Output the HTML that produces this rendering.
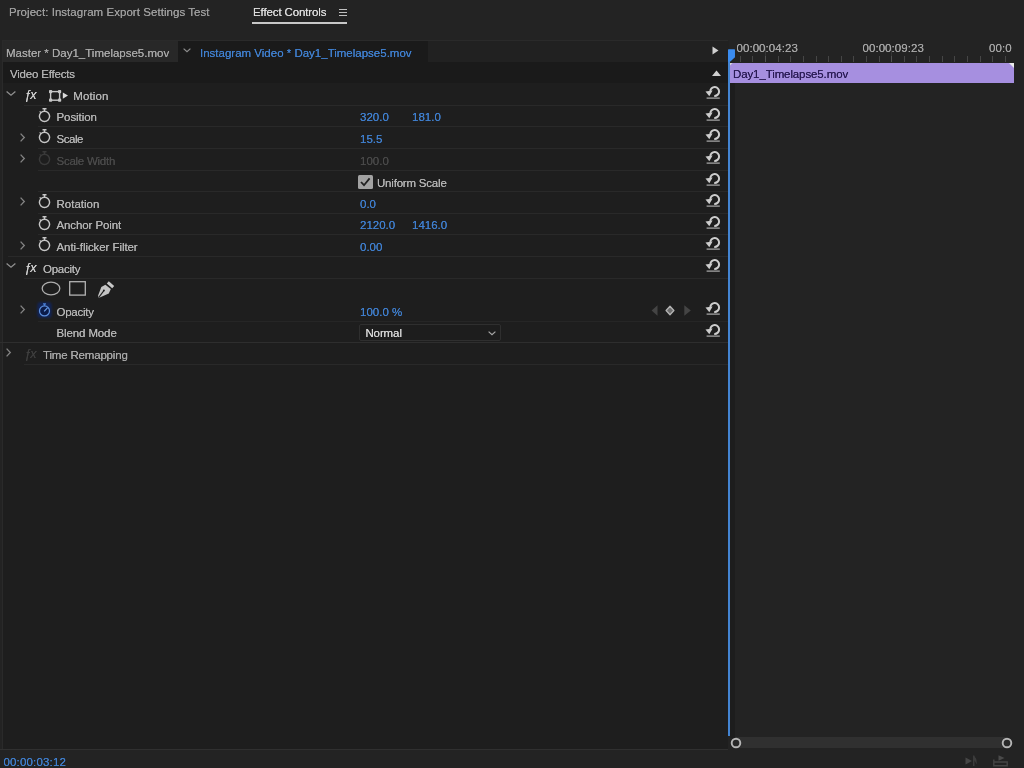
<!DOCTYPE html>
<html>
<head>
<meta charset="utf-8">
<title>Effect Controls</title>
<style>
html,body{margin:0;padding:0;}
body{width:1024px;height:768px;overflow:hidden;background:#232323;position:relative;
  font-family:"Liberation Sans","DejaVu Sans",sans-serif;font-size:11.5px;color:#b4b4b4;}
.a{position:absolute;}
.t{position:absolute;white-space:nowrap;line-height:14px;height:14px;filter:blur(0.35px);text-shadow:0 0 0.6px currentColor;}
.blue{color:#4080d0;}
.dim{color:#4a4a4a;}
.sep{position:absolute;height:1px;background:#2b2b2b;left:36px;width:688px;}
svg{position:absolute;overflow:visible;}
</style>
</head>
<body>
<!-- panel body -->
<div class="a" style="left:2px;top:41px;width:726px;height:708px;background:#1e1e1e;"></div>
<div class="a" style="left:2px;top:40px;width:726px;height:1px;background:#2a2a2a;"></div>
<div class="a" style="left:2px;top:41px;width:1px;height:708px;background:#2a2a2a;"></div>
<!-- timeline area bg -->
<div class="a" style="left:728px;top:41px;width:296px;height:708px;background:#232323;"></div>
<div class="a" style="left:730px;top:83px;width:4.5px;height:655px;background:#1d1d1d;"></div>

<!-- tab header -->
<div class="t" style="left:9px;top:5.1px;color:#9d9d9d;letter-spacing:0.05px;">Project: Instagram Export Settings Test</div>
<div class="t" style="left:253px;top:5.2px;color:#dcdcdc;letter-spacing:-0.12px;">Effect Controls</div>
<div class="a" style="left:252px;top:21.6px;width:95px;height:2px;background:#c8c8c8;"></div>
<svg style="left:339px;top:9px" width="8" height="8" viewBox="0 0 8 8"><path d="M0 0.5H8M0 3.5H8M0 6.5H8" stroke="#c0c0c0" stroke-width="1.1" fill="none"/></svg>

<!-- clip row -->
<div class="a" style="left:3px;top:41px;width:175px;height:21px;background:#282828;"></div>
<div class="a" style="left:178px;top:41px;width:250px;height:21px;background:#1a1a1a;"></div>
<div class="a" style="left:428px;top:41px;width:301px;height:21px;background:#212121;"></div>
<div class="t" style="left:6px;top:46px;color:#a8a8a8;">Master * Day1_Timelapse5.mov</div>
<svg style="left:183px;top:47.5px" width="8" height="5" viewBox="0 0 8 5"><path d="M0.6 0.6L4 3.8L7.4 0.6" stroke="#8e8e8e" stroke-width="1.2" fill="none"/></svg>
<div class="t blue" style="left:200px;top:46px;">Instagram Video * Day1_Timelapse5.mov</div>
<svg style="left:712.3px;top:46.3px" width="7" height="9" viewBox="0 0 7 9"><path d="M0.5 0.5L6.5 4.5L0.5 8.5Z" fill="#d0d0d0"/></svg>

<!-- Video Effects row -->
<div class="a" style="left:3px;top:62px;width:726px;height:21px;background:#1a1a1a;"></div>
<div class="t" style="left:10px;top:67px;color:#b0b0b0;letter-spacing:-0.2px;">Video Effects</div>
<svg style="left:712px;top:70px" width="9" height="6" viewBox="0 0 9 6"><path d="M0 6L4.5 0.5L9 6Z" fill="#d0d0d0"/></svg>

<div id="rows">
<svg style="left:6px;top:90.6px" width="10" height="5" viewBox="0 0 10 5"><path d="M0.6 0.6L5 4.2L9.4 0.6" stroke="#909090" stroke-width="1.3" fill="none"/></svg>
<div class="t" style="left:24.2px;top:87.7px;font-style:italic;font-size:12.5px;letter-spacing:-0.9px;color:#cfcfcf;">&#402;x</div>
<svg style="left:48.5px;top:90.0px" width="20" height="12" viewBox="0 0 20 12"><rect x="1.6" y="1.6" width="9" height="8.6" stroke="#c6c6c6" stroke-width="1.4" fill="none"/><rect x="0" y="0" width="3.2" height="3.2" rx="0.8" fill="#c6c6c6"/><rect x="9" y="0" width="3.2" height="3.2" rx="0.8" fill="#c6c6c6"/><rect x="0" y="8.6" width="3.2" height="3.2" rx="0.8" fill="#c6c6c6"/><rect x="9" y="8.6" width="3.2" height="3.2" rx="0.8" fill="#c6c6c6"/><path d="M13.8 2.6L19 5.6L13.8 8.7Z" fill="#dadada"/></svg>
<div class="t " style="left:73.3px;top:88.7px;letter-spacing:0.12px;">Motion</div>
<svg style="left:705px;top:84.1px" width="16" height="16" viewBox="0 0 16 16"><path d="M5.3 7.5A4.4 4.4 0 1 1 9.2 11.87" stroke="#cdcdcd" stroke-width="2" fill="none"/><path d="M0.5 7.6L7.6 6.4L4.3 12.2Z" fill="#cdcdcd"/><path d="M1.6 14.1H14.8" stroke="#b4b4b4" stroke-width="1.15"/></svg>
<div class="a" style="left:24px;top:104.7px;width:704px;height:1px;background:#292929;"></div>
<svg style="left:37.7px;top:106.7px" width="13" height="16" viewBox="0 0 13 16"><circle cx="6.5" cy="9.3" r="5.1" stroke="#c6c6c6" stroke-width="1.45" fill="none"/><path d="M4.5 1.7H8.5M6.5 1.7V4.2" stroke="#c6c6c6" stroke-width="1.4" fill="none"/><path d="M2.9 5.6L1.7 4.4" stroke="#c6c6c6" stroke-width="1.3" fill="none"/></svg>
<div class="t " style="left:56.5px;top:110.3px;letter-spacing:-0.08px;">Position</div>
<div class="t blue" style="left:360px;top:110.3px;">320.0</div>
<div class="t blue" style="left:412px;top:110.3px;">181.0</div>
<svg style="left:705px;top:105.7px" width="16" height="16" viewBox="0 0 16 16"><path d="M5.3 7.5A4.4 4.4 0 1 1 9.2 11.87" stroke="#cdcdcd" stroke-width="2" fill="none"/><path d="M0.5 7.6L7.6 6.4L4.3 12.2Z" fill="#cdcdcd"/><path d="M1.6 14.1H14.8" stroke="#b4b4b4" stroke-width="1.15"/></svg>
<div class="a" style="left:38px;top:126.3px;width:690px;height:1px;background:#292929;"></div>
<svg style="left:20.2px;top:132.5px" width="5" height="9" viewBox="0 0 5 9"><path d="M0.6 0.6L4.3 4.5L0.6 8.4" stroke="#858585" stroke-width="1.3" fill="none"/></svg>
<svg style="left:37.7px;top:128.3px" width="13" height="16" viewBox="0 0 13 16"><circle cx="6.5" cy="9.3" r="5.1" stroke="#c6c6c6" stroke-width="1.45" fill="none"/><path d="M4.5 1.7H8.5M6.5 1.7V4.2" stroke="#c6c6c6" stroke-width="1.4" fill="none"/><path d="M2.9 5.6L1.7 4.4" stroke="#c6c6c6" stroke-width="1.3" fill="none"/></svg>
<div class="t " style="left:56.5px;top:131.9px;letter-spacing:-0.45px;">Scale</div>
<div class="t blue" style="left:360px;top:131.9px;">15.5</div>
<svg style="left:705px;top:127.3px" width="16" height="16" viewBox="0 0 16 16"><path d="M5.3 7.5A4.4 4.4 0 1 1 9.2 11.87" stroke="#cdcdcd" stroke-width="2" fill="none"/><path d="M0.5 7.6L7.6 6.4L4.3 12.2Z" fill="#cdcdcd"/><path d="M1.6 14.1H14.8" stroke="#b4b4b4" stroke-width="1.15"/></svg>
<div class="a" style="left:38px;top:147.9px;width:690px;height:1px;background:#292929;"></div>
<svg style="left:20.2px;top:154.1px" width="5" height="9" viewBox="0 0 5 9"><path d="M0.6 0.6L4.3 4.5L0.6 8.4" stroke="#858585" stroke-width="1.3" fill="none"/></svg>
<svg style="left:37.7px;top:149.9px" width="13" height="16" viewBox="0 0 13 16"><circle cx="6.5" cy="9.3" r="5.1" stroke="#3a3a3a" stroke-width="1.45" fill="none"/><path d="M4.5 1.7H8.5M6.5 1.7V4.2" stroke="#3a3a3a" stroke-width="1.4" fill="none"/><path d="M2.9 5.6L1.7 4.4" stroke="#3a3a3a" stroke-width="1.3" fill="none"/></svg>
<div class="t dim" style="left:56.5px;top:153.5px;letter-spacing:-0.25px;">Scale Width</div>
<div class="t dim" style="left:360px;top:153.5px;">100.0</div>
<svg style="left:705px;top:148.9px" width="16" height="16" viewBox="0 0 16 16"><path d="M5.3 7.5A4.4 4.4 0 1 1 9.2 11.87" stroke="#cdcdcd" stroke-width="2" fill="none"/><path d="M0.5 7.6L7.6 6.4L4.3 12.2Z" fill="#cdcdcd"/><path d="M1.6 14.1H14.8" stroke="#b4b4b4" stroke-width="1.15"/></svg>
<div class="a" style="left:38px;top:169.5px;width:690px;height:1px;background:#292929;"></div>
<div class="a" style="left:358.3px;top:175.3px;width:14.5px;height:14px;background:#a2a2a2;border-radius:1.5px;"></div>
<svg style="left:358.3px;top:175.3px" width="14.5" height="14" viewBox="0 0 14.5 14"><path d="M3 7L6 10.2L11.6 3.4" stroke="#202020" stroke-width="1.8" fill="none"/></svg>
<div class="t " style="left:377px;top:175.6px;letter-spacing:-0.2px;">Uniform Scale</div>
<svg style="left:705px;top:170.5px" width="16" height="16" viewBox="0 0 16 16"><path d="M5.3 7.5A4.4 4.4 0 1 1 9.2 11.87" stroke="#cdcdcd" stroke-width="2" fill="none"/><path d="M0.5 7.6L7.6 6.4L4.3 12.2Z" fill="#cdcdcd"/><path d="M1.6 14.1H14.8" stroke="#b4b4b4" stroke-width="1.15"/></svg>
<div class="a" style="left:38px;top:191.1px;width:690px;height:1px;background:#292929;"></div>
<svg style="left:20.2px;top:197.3px" width="5" height="9" viewBox="0 0 5 9"><path d="M0.6 0.6L4.3 4.5L0.6 8.4" stroke="#858585" stroke-width="1.3" fill="none"/></svg>
<svg style="left:37.7px;top:193.1px" width="13" height="16" viewBox="0 0 13 16"><circle cx="6.5" cy="9.3" r="5.1" stroke="#c6c6c6" stroke-width="1.45" fill="none"/><path d="M4.5 1.7H8.5M6.5 1.7V4.2" stroke="#c6c6c6" stroke-width="1.4" fill="none"/><path d="M2.9 5.6L1.7 4.4" stroke="#c6c6c6" stroke-width="1.3" fill="none"/></svg>
<div class="t " style="left:56.5px;top:196.7px;">Rotation</div>
<div class="t blue" style="left:360px;top:196.7px;">0.0</div>
<svg style="left:705px;top:192.1px" width="16" height="16" viewBox="0 0 16 16"><path d="M5.3 7.5A4.4 4.4 0 1 1 9.2 11.87" stroke="#cdcdcd" stroke-width="2" fill="none"/><path d="M0.5 7.6L7.6 6.4L4.3 12.2Z" fill="#cdcdcd"/><path d="M1.6 14.1H14.8" stroke="#b4b4b4" stroke-width="1.15"/></svg>
<div class="a" style="left:38px;top:212.7px;width:690px;height:1px;background:#292929;"></div>
<svg style="left:37.7px;top:214.7px" width="13" height="16" viewBox="0 0 13 16"><circle cx="6.5" cy="9.3" r="5.1" stroke="#c6c6c6" stroke-width="1.45" fill="none"/><path d="M4.5 1.7H8.5M6.5 1.7V4.2" stroke="#c6c6c6" stroke-width="1.4" fill="none"/><path d="M2.9 5.6L1.7 4.4" stroke="#c6c6c6" stroke-width="1.3" fill="none"/></svg>
<div class="t " style="left:56.5px;top:218.3px;letter-spacing:-0.1px;">Anchor Point</div>
<div class="t blue" style="left:360px;top:218.3px;">2120.0</div>
<div class="t blue" style="left:412px;top:218.3px;">1416.0</div>
<svg style="left:705px;top:213.7px" width="16" height="16" viewBox="0 0 16 16"><path d="M5.3 7.5A4.4 4.4 0 1 1 9.2 11.87" stroke="#cdcdcd" stroke-width="2" fill="none"/><path d="M0.5 7.6L7.6 6.4L4.3 12.2Z" fill="#cdcdcd"/><path d="M1.6 14.1H14.8" stroke="#b4b4b4" stroke-width="1.15"/></svg>
<div class="a" style="left:38px;top:234.3px;width:690px;height:1px;background:#292929;"></div>
<svg style="left:20.2px;top:240.5px" width="5" height="9" viewBox="0 0 5 9"><path d="M0.6 0.6L4.3 4.5L0.6 8.4" stroke="#858585" stroke-width="1.3" fill="none"/></svg>
<svg style="left:37.7px;top:236.3px" width="13" height="16" viewBox="0 0 13 16"><circle cx="6.5" cy="9.3" r="5.1" stroke="#c6c6c6" stroke-width="1.45" fill="none"/><path d="M4.5 1.7H8.5M6.5 1.7V4.2" stroke="#c6c6c6" stroke-width="1.4" fill="none"/><path d="M2.9 5.6L1.7 4.4" stroke="#c6c6c6" stroke-width="1.3" fill="none"/></svg>
<div class="t " style="left:56.5px;top:239.9px;letter-spacing:-0.07px;">Anti-flicker Filter</div>
<div class="t blue" style="left:360px;top:239.9px;">0.00</div>
<svg style="left:705px;top:235.3px" width="16" height="16" viewBox="0 0 16 16"><path d="M5.3 7.5A4.4 4.4 0 1 1 9.2 11.87" stroke="#cdcdcd" stroke-width="2" fill="none"/><path d="M0.5 7.6L7.6 6.4L4.3 12.2Z" fill="#cdcdcd"/><path d="M1.6 14.1H14.8" stroke="#b4b4b4" stroke-width="1.15"/></svg>
<div class="a" style="left:8px;top:255.9px;width:720px;height:1px;background:#292929;"></div>
<svg style="left:6px;top:263.4px" width="10" height="5" viewBox="0 0 10 5"><path d="M0.6 0.6L5 4.2L9.4 0.6" stroke="#909090" stroke-width="1.3" fill="none"/></svg>
<div class="t" style="left:24.2px;top:260.5px;font-style:italic;font-size:12.5px;letter-spacing:-0.9px;color:#cfcfcf;">&#402;x</div>
<div class="t " style="left:43px;top:261.5px;letter-spacing:-0.25px;">Opacity</div>
<svg style="left:705px;top:256.9px" width="16" height="16" viewBox="0 0 16 16"><path d="M5.3 7.5A4.4 4.4 0 1 1 9.2 11.87" stroke="#cdcdcd" stroke-width="2" fill="none"/><path d="M0.5 7.6L7.6 6.4L4.3 12.2Z" fill="#cdcdcd"/><path d="M1.6 14.1H14.8" stroke="#b4b4b4" stroke-width="1.15"/></svg>
<div class="a" style="left:24px;top:277.5px;width:704px;height:1px;background:#292929;"></div>
<svg style="left:40.5px;top:281.0px" width="20" height="15" viewBox="0 0 20 15"><ellipse cx="10" cy="7.5" rx="8.8" ry="6.3" stroke="#aeaeae" stroke-width="1.3" fill="none"/></svg>
<svg style="left:69.3px;top:280.9px" width="17" height="15" viewBox="0 0 17 15"><rect x="0.7" y="0.7" width="15.6" height="13.4" stroke="#b2b2b2" stroke-width="1.3" fill="none"/></svg>
<svg style="left:96.5px;top:280.5px" width="18" height="17" viewBox="0 0 18 17"><path d="M8.4 3.7L13.8 8.1L11.8 12.5L3.3 16.3L1.6 16.4L1.2 14.2L4.3 6Z" fill="#c4c4c4"/><path d="M11.8 0.3L17.2 5L15.2 7.2L9.8 2.5Z" fill="#c8c8c8"/><path d="M2.2 15.8L6.7 9.8" stroke="#1e1e1e" stroke-width="1.1"/><circle cx="6.9" cy="9.6" r="1" fill="#1e1e1e"/></svg>
<svg style="left:20.2px;top:305.3px" width="5" height="9" viewBox="0 0 5 9"><path d="M0.6 0.6L4.3 4.5L0.6 8.4" stroke="#858585" stroke-width="1.3" fill="none"/></svg>
<svg style="left:37.7px;top:301.1px" width="13" height="16" viewBox="0 0 13 16"><rect x="-0.6" y="1.2" width="14.2" height="15.6" rx="3" fill="#122457" style="filter:blur(0.9px)"/><circle cx="6.5" cy="9.9" r="5.0" stroke="#5c8fdc" stroke-width="1.25" fill="#0b1b4a"/><path d="M5 2.8H8M6.5 2.8V4.9" stroke="#4a7fd2" stroke-width="1.3" fill="none"/><path d="M6.2 10.4L9.6 6.6" stroke="#6a9ee8" stroke-width="1.2" fill="none"/></svg>
<div class="t " style="left:56.5px;top:304.7px;letter-spacing:-0.25px;">Opacity</div>
<div class="t blue" style="left:360px;top:304.7px;">100.0 %</div>
<svg style="left:705px;top:300.1px" width="16" height="16" viewBox="0 0 16 16"><path d="M5.3 7.5A4.4 4.4 0 1 1 9.2 11.87" stroke="#cdcdcd" stroke-width="2" fill="none"/><path d="M0.5 7.6L7.6 6.4L4.3 12.2Z" fill="#cdcdcd"/><path d="M1.6 14.1H14.8" stroke="#b4b4b4" stroke-width="1.15"/></svg>
<svg style="left:650.6px;top:304.9px" width="42" height="11" viewBox="0 0 42 11"><path d="M6.5 0.3L0.6 5.5L6.5 10.7Z" fill="#444"/><path d="M33.3 0.3L39.8 5.5L33.3 10.7Z" fill="#444"/><path d="M19 1.2L22.9 5.5L19 9.8L15.1 5.5Z" fill="#6c6c6c" stroke="#b4b4b4" stroke-width="1.3" stroke-linejoin="round"/></svg>
<div class="a" style="left:38px;top:320.7px;width:690px;height:1px;background:#262626;"></div>
<div class="t " style="left:56.5px;top:326.3px;letter-spacing:-0.12px;">Blend Mode</div>
<div class="a" style="left:359px;top:324.0px;width:142px;height:17px;box-sizing:border-box;border:1px solid #2f2f2f;background:#1d1d1d;border-radius:2px;"></div>
<div class="t " style="left:365.4px;top:326.3px;color:#d6d6d6;letter-spacing:-0.1px;">Normal</div>
<svg style="left:488px;top:330.5px" width="8" height="5" viewBox="0 0 8 5"><path d="M0.6 0.6L4 3.8L7.4 0.6" stroke="#a8a8a8" stroke-width="1.2" fill="none"/></svg>
<svg style="left:705px;top:321.7px" width="16" height="16" viewBox="0 0 16 16"><path d="M5.3 7.5A4.4 4.4 0 1 1 9.2 11.87" stroke="#cdcdcd" stroke-width="2" fill="none"/><path d="M0.5 7.6L7.6 6.4L4.3 12.2Z" fill="#cdcdcd"/><path d="M1.6 14.1H14.8" stroke="#b4b4b4" stroke-width="1.15"/></svg>
<div class="a" style="left:0px;top:342.3px;width:729px;height:1px;background:#2e2e2e;"></div>
<svg style="left:6.3px;top:348.1px" width="5" height="9" viewBox="0 0 5 9"><path d="M0.6 0.6L4.3 4.5L0.6 8.4" stroke="#858585" stroke-width="1.3" fill="none"/></svg>
<div class="t" style="left:24.2px;top:346.9px;font-style:italic;font-size:12.5px;letter-spacing:-0.9px;color:#3e3e3e;">&#402;x</div>
<div class="t " style="left:43px;top:347.9px;color:#a8a8a8;letter-spacing:-0.18px;">Time Remapping</div>
<div class="a" style="left:24px;top:364.4px;width:705px;height:1px;background:#292929;"></div>
</div><!--/rows-->

<div id="tl">
<div class="a" style="left:739.8px;top:56px;width:1px;height:5.5px;background:#464646;"></div>
<div class="a" style="left:752.4px;top:56px;width:1px;height:5.5px;background:#464646;"></div>
<div class="a" style="left:765.0px;top:47px;width:1px;height:9px;background:#363636;"></div>
<div class="a" style="left:765.0px;top:56px;width:1px;height:5.5px;background:#505050;"></div>
<div class="a" style="left:777.6px;top:56px;width:1px;height:5.5px;background:#464646;"></div>
<div class="a" style="left:790.2px;top:56px;width:1px;height:5.5px;background:#464646;"></div>
<div class="a" style="left:802.9px;top:56px;width:1px;height:5.5px;background:#464646;"></div>
<div class="a" style="left:815.5px;top:56px;width:1px;height:5.5px;background:#464646;"></div>
<div class="a" style="left:828.1px;top:56px;width:1px;height:5.5px;background:#464646;"></div>
<div class="a" style="left:840.7px;top:56px;width:1px;height:5.5px;background:#464646;"></div>
<div class="a" style="left:853.3px;top:56px;width:1px;height:5.5px;background:#464646;"></div>
<div class="a" style="left:866.0px;top:56px;width:1px;height:5.5px;background:#464646;"></div>
<div class="a" style="left:878.6px;top:56px;width:1px;height:5.5px;background:#464646;"></div>
<div class="a" style="left:891.2px;top:47px;width:1px;height:9px;background:#363636;"></div>
<div class="a" style="left:891.2px;top:56px;width:1px;height:5.5px;background:#505050;"></div>
<div class="a" style="left:903.8px;top:56px;width:1px;height:5.5px;background:#464646;"></div>
<div class="a" style="left:916.4px;top:56px;width:1px;height:5.5px;background:#464646;"></div>
<div class="a" style="left:929.1px;top:56px;width:1px;height:5.5px;background:#464646;"></div>
<div class="a" style="left:941.7px;top:56px;width:1px;height:5.5px;background:#464646;"></div>
<div class="a" style="left:954.3px;top:56px;width:1px;height:5.5px;background:#464646;"></div>
<div class="a" style="left:966.9px;top:56px;width:1px;height:5.5px;background:#464646;"></div>
<div class="a" style="left:979.5px;top:56px;width:1px;height:5.5px;background:#464646;"></div>
<div class="a" style="left:992.2px;top:56px;width:1px;height:5.5px;background:#464646;"></div>
<div class="a" style="left:1004.8px;top:56px;width:1px;height:5.5px;background:#464646;"></div>
<div class="t" style="left:736.5px;top:41.3px;color:#a6a6a6;letter-spacing:0.06px;">00:00:04:23</div>
<div class="t" style="left:862.5px;top:41.3px;color:#a6a6a6;letter-spacing:0.06px;">00:00:09:23</div>
<div class="t" style="left:989px;top:41.3px;color:#a6a6a6;letter-spacing:0.06px;">00:0</div>
<div class="a" style="left:730px;top:62.5px;width:283.5px;height:20.5px;background:#a68fe0;"></div>
<div class="t" style="left:733px;top:67px;color:#2a1b55;letter-spacing:-0.11px;">Day1_Timelapse5.mov</div>
<svg style="left:730px;top:62.5px" width="3" height="3" viewBox="0 0 3 3"><path d="M0 0H2.6L0 2.6Z" fill="#d8d8d8"/></svg>
<svg style="left:1008.5px;top:62.5px" width="5" height="5" viewBox="0 0 5 5"><path d="M0 0H5V5Z" fill="#ececec"/></svg>
<div class="a" style="left:728px;top:58px;width:2.4px;height:678px;background:#4384d2;"></div>
<svg style="left:728px;top:48.8px" width="7.2" height="13" viewBox="0 0 7.2 13"><path d="M0 0.9Q0 0.3 0.6 0.3H6.4Q7 0.3 7 0.9V8.2L2.4 12.6H0Z" fill="#3a8cf0"/></svg>
<div class="a" style="left:736px;top:737.4px;width:270px;height:11px;background:#303030;"></div>
<svg style="left:729.5px;top:737.3px" width="12" height="12" viewBox="0 0 12 12"><circle cx="6" cy="6" r="4.3" fill="#282828" stroke="#b6b6b6" stroke-width="1.9"/></svg>
<svg style="left:1000.5px;top:737.3px" width="12" height="12" viewBox="0 0 12 12"><circle cx="6" cy="6" r="4.3" fill="#282828" stroke="#b6b6b6" stroke-width="1.9"/></svg>
<svg style="left:965px;top:754.5px" width="15" height="12" viewBox="0 0 15 12"><path d="M0.5 2.5L7 6L0.5 9.5Z" fill="#464646"/><path d="M8.8 0.5V11" stroke="#464646" stroke-width="1.1" fill="none"/><path d="M8.8 0.5Q12.5 4 11.5 9.5Q10.5 6 8.8 5Z" fill="#3c3c3c"/></svg>
<svg style="left:993px;top:754.5px" width="15" height="12" viewBox="0 0 15 12"><path d="M0.8 4.5V10.8H14.2V6.2M0.8 7H14" stroke="#454545" stroke-width="1.4" fill="none"/><path d="M5.5 0.3L11.5 3L5.5 5.7Z" fill="#4a4a4a"/></svg>
</div><!--/tl-->
<!-- bottom -->
<div class="a" style="left:0px;top:748.5px;width:728px;height:1px;background:#303030;"></div>
<div class="t blue" style="left:3.4px;top:754.5px;letter-spacing:0.17px;">00:00:03:12</div>
</body>
</html>
